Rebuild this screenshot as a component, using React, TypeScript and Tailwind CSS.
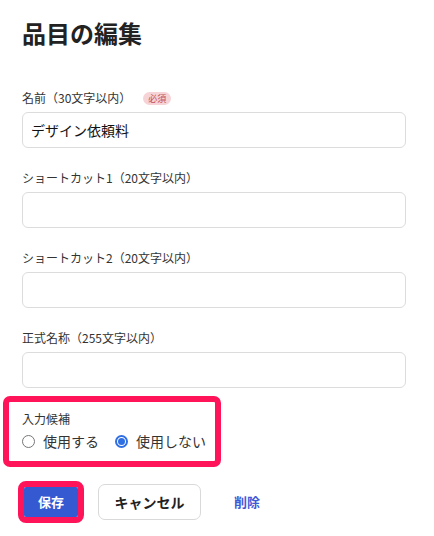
import React from "react";

const font = { fontFamily: '"Noto Sans CJK JP", "Noto Sans", sans-serif' };

function Field({ label, value, required, last }: { label: string; value?: string; required?: boolean; last?: boolean }) {
  return (
    <div className={last ? "mb-[8px]" : "mb-[21px]"}>
      <div className="flex items-center h-[18px] mb-[5px]">
        <span className="text-[12px] leading-[18px] text-[#333]">{label}</span>
        {required && (
          <span className="ml-[12px] inline-flex items-center justify-center h-[13px] px-[5px] rounded-full bg-[#f6d3d6] text-[#c2505b] text-[9px] leading-[13px]">
            必須
          </span>
        )}
      </div>
      <div className="h-[36px] w-[384px] rounded-[6px] border border-[#dcdcdc] bg-white flex items-center px-[8px]">
        <span className="text-[14px] text-[#111]">{value}</span>
      </div>
    </div>
  );
}

export default function App() {
  return (
    <div className="bg-white w-[434px] h-[536px] pl-[22px] pt-[17px]" style={font}>
      <h1 className="text-[24px] leading-[32px] font-bold text-[#222] mb-[40px]">品目の編集</h1>
      <Field label="名前（30文字以内）" value="デザイン依頼料" required />
      <Field label="ショートカット1（20文字以内）" />
      <Field label="ショートカット2（20文字以内）" />
      <Field label="正式名称（255文字以内）" last />
      <div className="ml-[-19px] w-[218px] h-[71px] border-[6px] border-[#ff1459] rounded-[7px] pl-[13px] pt-[8px]">
        <div className="text-[12px] leading-[18px] text-[#333]">入力候補</div>
        <div className="flex items-center h-[20px] mt-[3px] text-[14px] text-[#333]">
          <label className="flex items-center">
            <span className="w-[13px] h-[13px] rounded-full border border-[#767676] bg-white inline-block"></span>
            <span className="ml-[8px]">使用する</span>
          </label>
          <label className="flex items-center ml-[16px]">
            <span className="w-[13px] h-[13px] rounded-full border-[2px] border-[#2f6fe4] bg-white inline-flex items-center justify-center">
              <span className="w-[7px] h-[7px] rounded-full bg-[#2f6fe4]"></span>
            </span>
            <span className="ml-[8px]">使用しない</span>
          </label>
        </div>
      </div>
      <div className="flex items-center mt-[14px] ml-[-4px]">
        <div className="border-[6px] border-[#ff1459] rounded-[8px]">
          <button className="w-[54px] h-[30px] bg-[#3459d1] text-white text-[13px] font-bold rounded-[2px] flex items-center justify-center">
            保存
          </button>
        </div>
        <button className="ml-[14px] w-[103px] h-[36px] rounded-[7px] border border-[#d9d9d9] bg-white text-[14px] font-bold text-[#222] flex items-center justify-center">
          キャンセル
        </button>
        <button className="ml-[33px] text-[13px] font-bold text-[#3f5ad6]">削除</button>
      </div>
    </div>
  );
}
